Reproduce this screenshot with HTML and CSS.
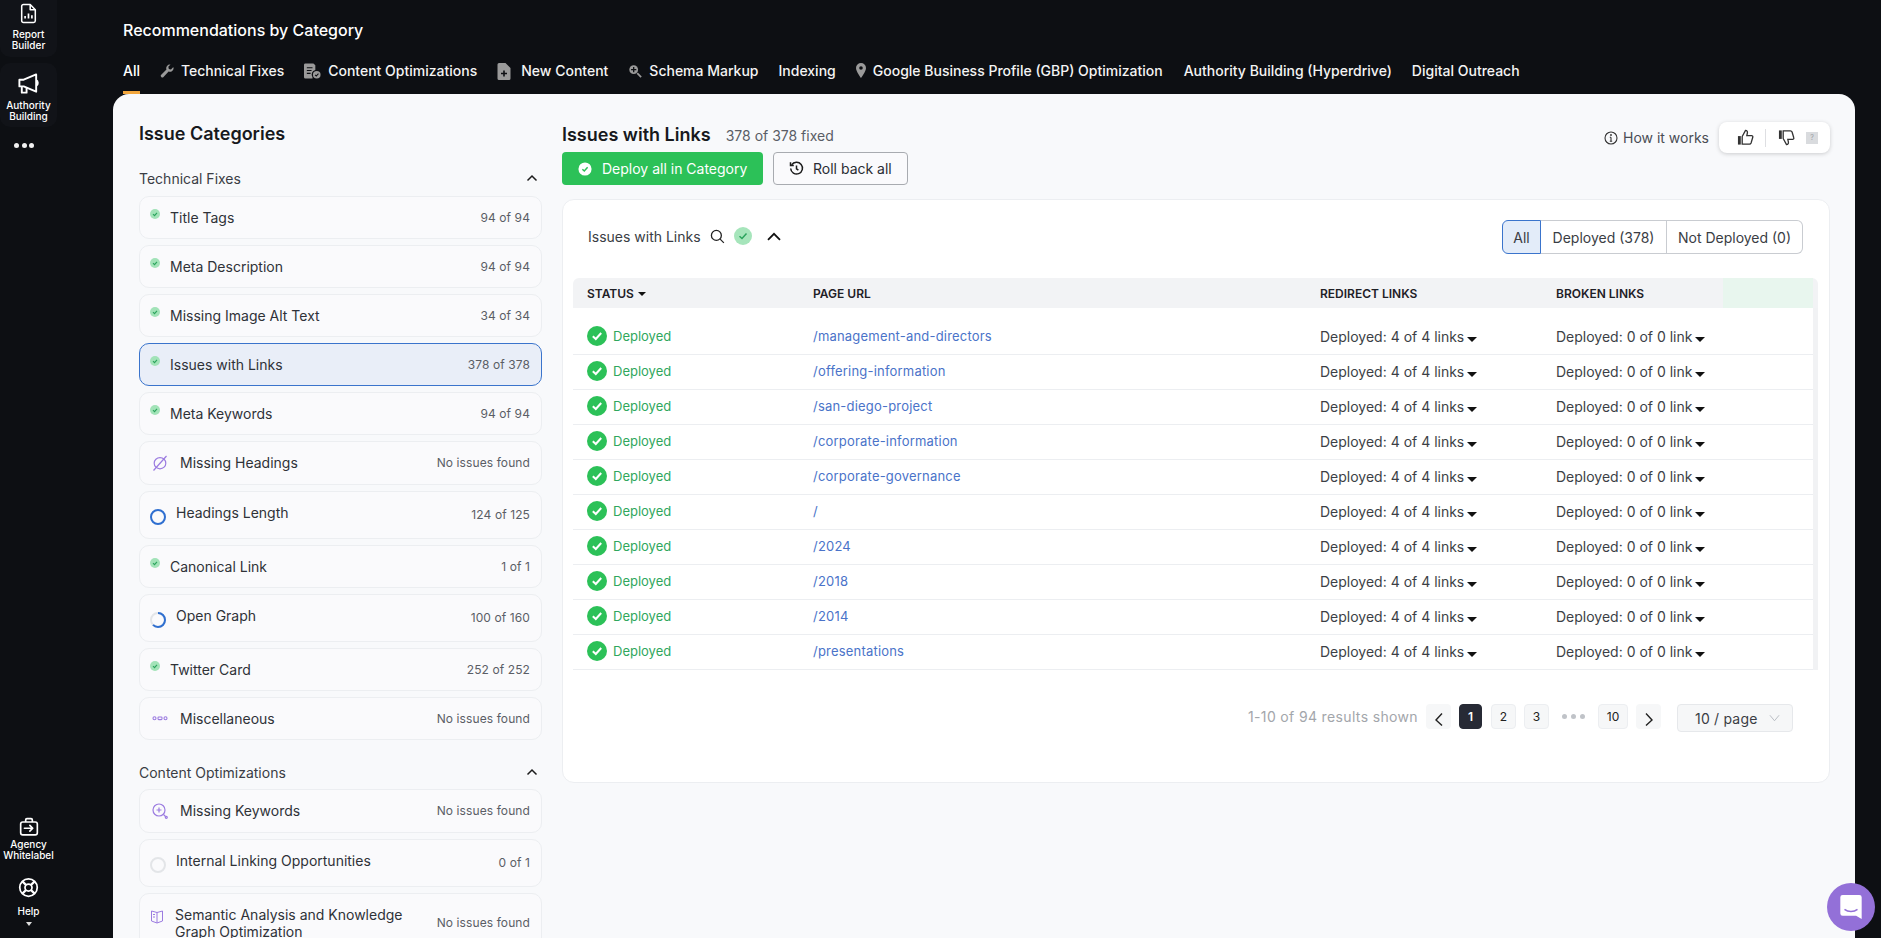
FILE: index.html
```html
<!DOCTYPE html>
<html lang="en">
<head>
<meta charset="utf-8">
<title>Recommendations by Category</title>
<link rel="stylesheet" href="styles.css">
</head>
<body>
<div class="app">
  <aside class="rail">
    <div class="rail-top">
      <div class="tile tile-first">
        <svg class="rail-icon" viewBox="0 0 20 24" fill="none" stroke="#fff" stroke-width="1.8" stroke-linejoin="round"><path d="M2 3.5A2 2 0 0 1 4 1.5h8l6 6v13a2 2 0 0 1-2 2H4a2 2 0 0 1-2-2z"/><path d="M12 1.5v6h6"/><path d="M6 18v-3M10 18v-6M14 18v-4" stroke-width="2"/></svg>
        <span class="rail-label">Report<br>Builder</span>
      </div>
      <div class="tile">
        <svg class="rail-icon" viewBox="0 0 24 24" fill="none" stroke="#fff" stroke-width="2" stroke-linejoin="round"><path d="M20 2 7 7.5H2.5v7H7L20 20z"/><path d="M20 8c2 .5 2.5 5 0 6"/><path d="M5 15v6h5v-5"/></svg>
        <span class="rail-label">Authority<br>Building</span>
      </div>
      <div class="rail-dots"><i></i><i></i><i></i></div>
    </div>
    <div class="rail-bottom">
      <div class="rail-item">
        <svg class="rail-icon" viewBox="0 0 24 24" fill="none" stroke="#fff" stroke-width="2" stroke-linejoin="round"><rect x="2" y="6" width="20" height="15.5" rx="2.5"/><path d="M8 6V3.5A1.5 1.5 0 0 1 9.500 2h5A1.500 1.500 0 0 1 16 3.500V6"/><path d="M6.500 13.500h10M13 10l3.500 3.500L13 17" stroke-linecap="round"/></svg>
        <span class="rail-label">Agency<br>Whitelabel</span>
      </div>
      <div class="rail-item rail-help">
        <svg class="rail-icon help-icon" viewBox="0 0 24 24" fill="none" stroke="#fff" stroke-width="2"><circle cx="12" cy="12" r="10"/><circle cx="12" cy="12" r="4"/><path d="M5 5l4.200 4.200M19 5l-4.200 4.200M5 19l4.200-4.200M19 19l-4.200-4.200" stroke-width="2.600"/></svg>
        <span class="rail-label">Help</span>
        <span class="help-caret"></span>
      </div>
    </div>
  </aside>

  <main class="main">
    <header class="top">
      <h1 class="page-title">Recommendations by Category</h1>
      <nav class="tabs">
        <a class="tab tab-active">All</a>
        <a class="tab"><svg class="tab-icon tab-icon-wrench" viewBox="0 0 16 16" fill="#9a9a9a"><path d="M15.500 4.200a4.300 4.300 0 0 1-5.700 4.500L4 14.800a1.700 1.700 0 0 1-2.600-2.500l6-5.900A4.300 4.300 0 0 1 12 .6L9.500 3.200l.6 2.400 2.400.6L15 3.700c.3.100.5.300.5.500z"/></svg>Technical Fixes</a>
        <a class="tab"><svg class="tab-icon tab-icon-wide" viewBox="0 0 18 16" fill="#9a9a9a"><path d="M1.500 0h8.500l2 2v5a4.800 4.800 0 0 0-3 7.500V16H1.500A1.500 1.500 0 0 1 0 14.500v-13A1.500 1.500 0 0 1 1.500 0z"/><path d="M3 4.500h6M3 7.500h5M3 10.500h4" stroke="#0d0f13" stroke-width="1.200"/><circle cx="13.500" cy="12" r="4"/><path d="M11.700 12l1.300 1.300 2.300-2.500" fill="none" stroke="#0d0f13" stroke-width="1.100"/></svg>Content Optimizations</a>
        <a class="tab tab-new"><svg class="tab-icon tab-icon-doc" viewBox="0 0 14 17" fill="#9a9a9a"><path d="M2 0h6.500L13.500 5v10.500A1.500 1.500 0 0 1 12 17H2A1.500 1.500 0 0 1 .5 15.500v-14A1.500 1.500 0 0 1 2 0z"/><path d="M7 7.500v6M4 10.500h6" stroke="#0d0f13" stroke-width="1.600"/></svg>New Content</a>
        <a class="tab"><svg class="tab-icon tab-icon-wrench" viewBox="0 0 16 16" fill="none" stroke="#9a9a9a"><circle cx="6.500" cy="6.500" r="5" fill="#9a9a9a" stroke="none"/><path d="M6.500 3.500v6M3.500 6.500h6" stroke="#0d0f13" stroke-width="1.500"/><path d="M10.500 10.500l4.500 4.500" stroke-width="2"/></svg>Schema Markup</a>
        <a class="tab">Indexing</a>
        <a class="tab"><svg class="tab-icon tab-icon-pin" viewBox="0 0 10 15" fill="#9a9a9a"><path fill-rule="evenodd" d="M5 0a5 5 0 0 1 5 5c0 3.500-5 10-5 10S0 8.500 0 5a5 5 0 0 1 5-5zm0 3.200a1.800 1.800 0 1 0 0 3.600 1.800 1.800 0 0 0 0-3.600z"/></svg>Google Business Profile (GBP) Optimization</a>
        <a class="tab tab-authority">Authority Building (Hyperdrive)</a>
        <a class="tab">Digital Outreach</a>
      </nav>
    </header>

    <div class="panel">
      <section class="cats">
        <h2 class="cats-title">Issue Categories</h2>

        <div class="group-head"><span>Technical Fixes</span><svg class="chev" viewBox="0 0 12 8" fill="none" stroke="#1c1c1c" stroke-width="1.500"><path d="M1.500 6.500 6 2l4.500 4.500"/></svg></div>
        <div class="row"><div class="row-l"><span class="dot"><svg viewBox="0 0 10 10" fill="none" stroke="#2aa35c" stroke-width="1.100"><path d="M3 5.200 4.500 6.600 7 3.800"/></svg></span><span>Title Tags</span></div><span class="count">94 of 94</span></div>
        <div class="row"><div class="row-l"><span class="dot"><svg viewBox="0 0 10 10" fill="none" stroke="#2aa35c" stroke-width="1.100"><path d="M3 5.200 4.500 6.600 7 3.800"/></svg></span><span>Meta Description</span></div><span class="count">94 of 94</span></div>
        <div class="row"><div class="row-l"><span class="dot"><svg viewBox="0 0 10 10" fill="none" stroke="#2aa35c" stroke-width="1.100"><path d="M3 5.200 4.500 6.600 7 3.800"/></svg></span><span>Missing Image Alt Text</span></div><span class="count">34 of 34</span></div>
        <div class="row row-active"><div class="row-l"><span class="dot"><svg viewBox="0 0 10 10" fill="none" stroke="#2aa35c" stroke-width="1.100"><path d="M3 5.200 4.500 6.600 7 3.800"/></svg></span><span>Issues with Links</span></div><span class="count">378 of 378</span></div>
        <div class="row"><div class="row-l"><span class="dot"><svg viewBox="0 0 10 10" fill="none" stroke="#2aa35c" stroke-width="1.100"><path d="M3 5.200 4.500 6.600 7 3.800"/></svg></span><span>Meta Keywords</span></div><span class="count">94 of 94</span></div>
        <div class="row row-empty"><div class="row-l row-l-purple"><svg class="purple" viewBox="0 0 16 16" fill="none" stroke="#9b7be0" stroke-width="1.200"><ellipse cx="8" cy="8.200" rx="5.800" ry="5.600"/><path d="M14.500 1 1.500 15.500"/></svg><span>Missing Headings</span></div><span class="count">No issues found</span></div>
        <div class="row row-tall"><div class="row-l row-l-ring"><svg class="ring" viewBox="0 0 16 16" fill="none" stroke-width="2"><circle cx="8" cy="8" r="7" stroke="#2f6fd0"/></svg><span class="raised">Headings Length</span></div><span class="count">124 of 125</span></div>
        <div class="row"><div class="row-l"><span class="dot"><svg viewBox="0 0 10 10" fill="none" stroke="#2aa35c" stroke-width="1.100"><path d="M3 5.200 4.500 6.600 7 3.800"/></svg></span><span>Canonical Link</span></div><span class="count">1 of 1</span></div>
        <div class="row row-tall"><div class="row-l row-l-ring"><svg class="ring" viewBox="0 0 16 16" fill="none" stroke-width="2"><circle cx="8" cy="8" r="7" stroke="#e3e5e8"/><path d="M8 1a7 7 0 0 1 0 14 7 7 0 0 1-5-2.100" stroke="#2f6fd0"/></svg><span class="raised">Open Graph</span></div><span class="count">100 of 160</span></div>
        <div class="row"><div class="row-l"><span class="dot"><svg viewBox="0 0 10 10" fill="none" stroke="#2aa35c" stroke-width="1.100"><path d="M3 5.200 4.500 6.600 7 3.800"/></svg></span><span>Twitter Card</span></div><span class="count">252 of 252</span></div>
        <div class="row row-empty"><div class="row-l row-l-purple"><svg class="purple" viewBox="0 0 16 16" fill="none" stroke="#9b7be0" stroke-width="1.100"><circle cx="2.500" cy="8.300" r="1.500"/><circle cx="13.500" cy="8.300" r="1.500"/><rect x="6" y="7" width="4" height="2.600" rx=".8"/></svg><span>Miscellaneous</span></div><span class="count">No issues found</span></div>

        <div class="group-head group-second"><span>Content Optimizations</span><svg class="chev" viewBox="0 0 12 8" fill="none" stroke="#1c1c1c" stroke-width="1.500"><path d="M1.500 6.500 6 2l4.500 4.500"/></svg></div>
        <div class="row row-empty"><div class="row-l row-l-purple"><svg class="purple" viewBox="0 0 16 16" fill="none" stroke="#9b7be0" stroke-width="1.200"><circle cx="7" cy="7" r="6"/><path d="M7 4.500v5M4.500 7h5M11.500 11.500l2 2"/><circle cx="14.300" cy="14.300" r="1"/></svg><span>Missing Keywords</span></div><span class="count">No issues found</span></div>
        <div class="row row-tall"><div class="row-l row-l-ring"><svg class="ring" viewBox="0 0 16 16" fill="none" stroke-width="2"><circle cx="8" cy="8" r="7" stroke="#e3e5e8"/></svg><span class="raised">Internal Linking Opportunities</span></div><span class="count">0 of 1</span></div>
        <div class="row row-wrap"><div class="row-l row-l-book"><svg class="book" viewBox="0 0 14 14" fill="none" stroke="#9b7be0" stroke-width="1"><path d="M7 2.500 1.500 1v10L7 13l5.500-2V1zM7 2.500V13M3 4.500h2M3 7h2"/></svg><span class="wrap-name">Semantic Analysis and Knowledge Graph Optimization</span></div><span class="count">No issues found</span></div>
      </section>

      <section class="detail">
        <div class="detail-top">
          <div>
            <div class="detail-heading"><h2>Issues with Links</h2><span>378 of 378 fixed</span></div>
            <div class="actions">
              <button class="btn btn-green"><svg class="btn-icon" viewBox="0 0 16 16"><circle cx="8" cy="8" r="7.500" fill="#fff"/><path d="M5 8.200 7.200 10.300 11 6" fill="none" stroke="#2cc158" stroke-width="1.700"/></svg>Deploy all in Category</button>
              <button class="btn btn-outline"><svg class="btn-icon" viewBox="0 0 16 16" fill="none" stroke="#1c1c1c" stroke-width="1.600"><path d="M2.800 4.200A6.300 6.300 0 1 1 1.800 8"/><path d="M1.600 1.200v3.500h3.500"/><path d="M8 4.800v3.500l2 1.500"/></svg>Roll back all</button>
            </div>
          </div>
          <div class="detail-tools">
            <span class="how"><svg class="how-icon" viewBox="0 0 14 14" fill="none" stroke="#333" stroke-width="1.100"><circle cx="7" cy="7" r="6"/><path d="M7 6.200v4M5.800 10.200h2.400M5.800 6.200H7"/><circle cx="7" cy="4" r=".4"/></svg>How it works</span>
            <div class="vote">
              <svg class="thumb" viewBox="0 0 18 18" fill="none" stroke="#333" stroke-width="1.400"><rect x="1" y="7.500" width="3" height="9" fill="#333" stroke="none"/><path d="M5.500 8 9 1.500c1.500 0 2.300 1 2 2.500l-.6 3h5c1 0 1.600.9 1.300 1.800l-1.800 6c-.3.800-.9 1.200-1.700 1.200H5.500z"/></svg>
              <span class="vote-sep"></span>
              <svg class="thumb thumb-down" viewBox="0 0 18 18" fill="none" stroke="#333" stroke-width="1.400"><rect x="1" y="1.500" width="3" height="9" fill="#333" stroke="none"/><path d="M5.500 10 9 16.500c1.500 0 2.300-1 2-2.500l-.6-3h5c1 0 1.600-.9 1.300-1.800l-1.800-6C14.600 2.400 14 2 13.200 2H5.500z"/></svg>
              <span class="vote-help">?</span>
            </div>
          </div>
        </div>

        <div class="card">
          <div class="card-head">
            <div class="card-title">
              <span>Issues with Links</span>
              <svg class="search" viewBox="0 0 16 16" fill="none" stroke="#222" stroke-width="1.400"><circle cx="6.800" cy="6.800" r="5.300"/><path d="m10.800 10.800 4 4"/></svg>
              <span class="card-ok"><svg viewBox="0 0 18 18" fill="none" stroke="#2aa35c" stroke-width="1.500"><path d="M5.500 9.200 8 11.500l4.500-5"/></svg></span>
              <svg class="card-chev" viewBox="0 0 14 9" fill="none" stroke="#111" stroke-width="1.800"><path d="M1 7.800 7 1.800l6 6"/></svg>
            </div>
            <div class="seg">
              <span class="seg-item seg-on">All</span>
              <span class="seg-item seg-mid">Deployed (378)</span>
              <span class="seg-item seg-last">Not Deployed (0)</span>
            </div>
          </div>

          <div class="thead">
            <span class="th">STATUS<i class="caret caret-head"></i></span>
            <span class="th">PAGE URL</span>
            <span class="th">REDIRECT LINKS</span>
            <span class="th">BROKEN LINKS</span>
            <span class="th-green"></span>
          </div>
          <div class="tbody">
            <div class="tr"><span class="status"><svg class="ok" viewBox="0 0 20 20"><circle cx="10" cy="10" r="10" fill="#2cc158"/><path d="M5.800 10.200 8.800 13l5.400-6" fill="none" stroke="#fff" stroke-width="2"/></svg>Deployed</span><a class="url">/management-and-directors</a><span class="links">Deployed: 4 of 4 links<i class="caret"></i></span><span class="links">Deployed: 0 of 0 link<i class="caret"></i></span></div>
            <div class="tr"><span class="status"><svg class="ok" viewBox="0 0 20 20"><circle cx="10" cy="10" r="10" fill="#2cc158"/><path d="M5.800 10.200 8.800 13l5.400-6" fill="none" stroke="#fff" stroke-width="2"/></svg>Deployed</span><a class="url">/offering-information</a><span class="links">Deployed: 4 of 4 links<i class="caret"></i></span><span class="links">Deployed: 0 of 0 link<i class="caret"></i></span></div>
            <div class="tr"><span class="status"><svg class="ok" viewBox="0 0 20 20"><circle cx="10" cy="10" r="10" fill="#2cc158"/><path d="M5.800 10.200 8.800 13l5.400-6" fill="none" stroke="#fff" stroke-width="2"/></svg>Deployed</span><a class="url">/san-diego-project</a><span class="links">Deployed: 4 of 4 links<i class="caret"></i></span><span class="links">Deployed: 0 of 0 link<i class="caret"></i></span></div>
            <div class="tr"><span class="status"><svg class="ok" viewBox="0 0 20 20"><circle cx="10" cy="10" r="10" fill="#2cc158"/><path d="M5.800 10.200 8.800 13l5.400-6" fill="none" stroke="#fff" stroke-width="2"/></svg>Deployed</span><a class="url">/corporate-information</a><span class="links">Deployed: 4 of 4 links<i class="caret"></i></span><span class="links">Deployed: 0 of 0 link<i class="caret"></i></span></div>
            <div class="tr"><span class="status"><svg class="ok" viewBox="0 0 20 20"><circle cx="10" cy="10" r="10" fill="#2cc158"/><path d="M5.800 10.200 8.800 13l5.400-6" fill="none" stroke="#fff" stroke-width="2"/></svg>Deployed</span><a class="url">/corporate-governance</a><span class="links">Deployed: 4 of 4 links<i class="caret"></i></span><span class="links">Deployed: 0 of 0 link<i class="caret"></i></span></div>
            <div class="tr"><span class="status"><svg class="ok" viewBox="0 0 20 20"><circle cx="10" cy="10" r="10" fill="#2cc158"/><path d="M5.800 10.200 8.800 13l5.400-6" fill="none" stroke="#fff" stroke-width="2"/></svg>Deployed</span><a class="url">/</a><span class="links">Deployed: 4 of 4 links<i class="caret"></i></span><span class="links">Deployed: 0 of 0 link<i class="caret"></i></span></div>
            <div class="tr"><span class="status"><svg class="ok" viewBox="0 0 20 20"><circle cx="10" cy="10" r="10" fill="#2cc158"/><path d="M5.800 10.200 8.800 13l5.400-6" fill="none" stroke="#fff" stroke-width="2"/></svg>Deployed</span><a class="url">/2024</a><span class="links">Deployed: 4 of 4 links<i class="caret"></i></span><span class="links">Deployed: 0 of 0 link<i class="caret"></i></span></div>
            <div class="tr"><span class="status"><svg class="ok" viewBox="0 0 20 20"><circle cx="10" cy="10" r="10" fill="#2cc158"/><path d="M5.800 10.200 8.800 13l5.400-6" fill="none" stroke="#fff" stroke-width="2"/></svg>Deployed</span><a class="url">/2018</a><span class="links">Deployed: 4 of 4 links<i class="caret"></i></span><span class="links">Deployed: 0 of 0 link<i class="caret"></i></span></div>
            <div class="tr"><span class="status"><svg class="ok" viewBox="0 0 20 20"><circle cx="10" cy="10" r="10" fill="#2cc158"/><path d="M5.800 10.200 8.800 13l5.400-6" fill="none" stroke="#fff" stroke-width="2"/></svg>Deployed</span><a class="url">/2014</a><span class="links">Deployed: 4 of 4 links<i class="caret"></i></span><span class="links">Deployed: 0 of 0 link<i class="caret"></i></span></div>
            <div class="tr"><span class="status"><svg class="ok" viewBox="0 0 20 20"><circle cx="10" cy="10" r="10" fill="#2cc158"/><path d="M5.800 10.200 8.800 13l5.400-6" fill="none" stroke="#fff" stroke-width="2"/></svg>Deployed</span><a class="url">/presentations</a><span class="links">Deployed: 4 of 4 links<i class="caret"></i></span><span class="links">Deployed: 0 of 0 link<i class="caret"></i></span></div>
          </div>

          <div class="pager">
            <span class="pager-info">1-10 of 94 results shown</span>
            <span class="pg pg-arrow"><svg viewBox="0 0 10 14" fill="none" stroke="#222" stroke-width="1.400"><path d="M8 1.500 2 8l6 5.500"/></svg></span>
            <span class="pg pg-on">1</span>
            <span class="pg">2</span>
            <span class="pg">3</span>
            <span class="pg-dots"><i></i><i></i><i></i></span>
            <span class="pg pg-ten">10</span>
            <span class="pg pg-arrow"><svg viewBox="0 0 10 14" fill="none" stroke="#222" stroke-width="1.400"><path d="M2 1.500 8 8l-6 5.500"/></svg></span>
            <span class="page-size">10 / page<svg viewBox="0 0 12 8" fill="none" stroke="#b5b9bf" stroke-width="1"><path d="M1 1l5 6 5-6"/></svg></span>
          </div>
        </div>
      </section>
    </div>
  </main>
</div>
<div class="chat"><svg viewBox="0 0 24 28" width="24" height="26"><path fill="#fff" d="M3 1h18a2.500 2.500 0 0 1 2.500 2.500V27l-6-3.500H3A2.500 2.500 0 0 1 .5 21V3.500A2.500 2.500 0 0 1 3 1z"/><path d="M5 16.500c4 3 10 3 14 0" fill="none" stroke="#9370d8" stroke-width="1.600"/></svg></div>
</body>
</html>
```
FILE: styles.css
```css
* { box-sizing: border-box; }
html, body { margin: 0; height: 100%; overflow: hidden; }
body { background: #0d0f13; font-family: Inter, "Liberation Sans", sans-serif; color: #2a2d33; font-size: 14px; }
h1, h2 { margin: 0; }
.app { display: flex; height: 938px; }

/* rail */
.rail { width: 113px; flex: none; height: 938px; display: flex; flex-direction: column; justify-content: space-between; color: #fff; }
.rail-top { width: 57px; }
.tile { width: 57px; height: 64px; background: #111318; border-radius: 10px; display: flex; flex-direction: column; align-items: center; margin-bottom: 6px; padding-top: 9px; }
.tile-first { height: 57px; padding-top: 3px; border-radius: 0 0 10px 10px; }
.rail-icon { width: 20px; height: 22px; display: block; }
.tile .rail-icon { width: 23px; height: 24px; margin-bottom: 4px; }
.tile-first .rail-icon { width: 17px; height: 21px; margin-bottom: 5px; }
.rail-label { font-size: 10px; line-height: 11px; text-align: center; font-weight: 500; white-space: nowrap; }
.rail-dots { display: flex; gap: 2.500px; padding: 10px 0 0 14px; }
.rail-dots i { width: 5px; height: 5px; border-radius: 50%; background: #f1f1f1; }
.rail-bottom { width: 57px; padding-bottom: 12px; }
.rail-item { display: flex; flex-direction: column; align-items: center; }
.rail-item .rail-icon { margin-bottom: 1px; }
.rail-help { margin-top: 16px; }
.rail-item .help-icon { margin-bottom: 8px; width: 21px; height: 21px; }
.help-caret { width: 0; height: 0; border: 3.500px solid transparent; border-top: 4px solid #ddd; border-bottom: 0; margin-top: 5px; }

/* top */
.main { flex: 1; min-width: 0; display: flex; flex-direction: column; }
.top { height: 94px; padding: 21px 0 0 10px; }
.page-title { font-size: 16px; font-weight: 500; line-height: 19px; color: #fff; }
.tabs { display: flex; gap: 20px; margin-top: 22px; height: 32px; }
.tab { position: relative; display: flex; align-items: flex-start; gap: 7px; color: #f4f4f4; font-weight: 500; font-size: 14px; line-height: 18px; white-space: nowrap; }
.tab-active { color: #fff; }
.tab-active::after { content: ""; position: absolute; left: 0; right: 0; bottom: 0; height: 3px; background: #f2a63c; }
.tab-new { gap: 10px; }
.tab-authority { margin-left: 1px; }
.tab-icon { width: 15px; height: 16px; flex: none; margin-top: 1px; }
.tab-icon-wrench { width: 14px; }
.tab-icon-wide { width: 17px; }
.tab-icon-doc { width: 14px; height: 17px; }
.tab-icon-pin { width: 10px; height: 15px; }

/* panel */
.panel { flex: 1; min-height: 0; width: 1742px; background: #f8f9fb; border-radius: 16px 16px 0 0; padding: 28px 25px 0 26px; display: flex; gap: 20px; overflow: hidden; }
.cats { width: 403px; flex: none; }
.cats-title { font-size: 18px; line-height: 24px; font-weight: 600; color: #17191d; }
.group-head { display: flex; justify-content: space-between; align-items: center; margin-top: 23px; height: 18px; margin-bottom: 9px; font-size: 14px; color: #3a3d44; padding-right: 4px; }
.group-second { margin-top: 23px; margin-bottom: 8px; }
.chev { width: 12px; height: 8px; }
.row { display: flex; justify-content: space-between; align-items: center; height: 43px; margin-bottom: 6px; background: #fafafc; border: 1.500px solid #eceef1; border-radius: 10px; padding: 0 11px 0 10px; font-size: 14px; color: #2f3238; }
.row-l { display: flex; align-items: center; gap: 10px; }
.row-l-purple { gap: 12px; padding-left: 2px; }
.row-l-ring { gap: 10px; }
.row-l-book { gap: 11px; align-self: flex-start; padding-top: 12px; align-items: flex-start; }
.row-empty { height: 43.500px; }
.row-tall { height: 48px; }
.row-wrap { height: 60px; }
.row-active { background: #e9eef8; border-color: #3a74cc; }
.dot { width: 10px; height: 10px; border-radius: 50%; background: #a2e3b8; margin-top: -7px; display: block; }
.dot svg { display: block; width: 10px; height: 10px; }
.purple { width: 16px; height: 16px; }
.ring { width: 16px; height: 16px; margin-top: 4px; flex: none; }
.raised { margin-bottom: 5px; }
.book { width: 14px; height: 14px; margin-top: 4px; flex: none; }
.wrap-name { width: 240px; line-height: 17px; }
.count { font-size: 12px; color: #5a5e66; letter-spacing: .1px; white-space: nowrap; }

/* detail */
.detail { flex: 1; min-width: 0; }
.detail-top { display: flex; justify-content: space-between; align-items: flex-start; height: 77px; }
.detail-heading { display: flex; align-items: baseline; gap: 15px; height: 30px; padding-top: 1px; }
.detail-heading h2 { font-size: 18px; line-height: 24px; font-weight: 600; color: #17191d; }
.detail-heading span { font-size: 14px; color: #5a5e66; }
.actions { display: flex; gap: 10px; }
.btn { display: flex; align-items: center; height: 33px; border-radius: 4px; font-family: inherit; font-size: 14px; padding: 0; cursor: pointer; }
.btn-green { width: 201px; background: #2cc158; border: 0; color: #fff; padding-left: 16px; gap: 10px; }
.btn-outline { width: 135px; background: #fafafc; border: 1px solid #a8abb0; color: #2a2d33; padding-left: 15px; gap: 9px; }
.btn-icon { width: 14px; height: 14px; }
.btn-outline .btn-icon { width: 15px; height: 15px; }
.detail-tools { display: flex; align-items: center; gap: 10px; }
.how { display: flex; align-items: center; gap: 5px; font-size: 14px; color: #4a4d54; }
.how-icon { width: 14px; height: 14px; }
.vote { width: 111px; height: 31px; background: #fff; border-radius: 8px; box-shadow: 0 1px 4px rgba(0,0,0,.18); display: flex; align-items: center; padding-left: 18px; }
.thumb { width: 17px; height: 17px; }
.vote-sep { width: 1px; height: 18px; background: #dedfe2; margin: 0 12px 0 11px; }
.vote-help { width: 12px; height: 12px; background: #d9dbde; color: #9da0a5; font-size: 7px; line-height: 12px; text-align: center; margin-left: 11px; }

/* card */
.card { height: 584px; background: #fff; border: 1px solid #eceef1; border-radius: 12px; padding: 0 0 0 10px; }
.card-head { display: flex; justify-content: space-between; align-items: flex-start; height: 78px; padding: 20px 26px 0 15px; }
.card-title { display: flex; align-items: center; gap: 9px; height: 34px; margin-top: -1px; color: #3a3d44; font-size: 14px; }
.search { width: 15px; height: 15px; }
.card-ok { width: 18px; height: 18px; border-radius: 50%; background: #a6e5bb; display: block; }
.card-ok svg { display: block; width: 18px; height: 18px; }
.card-chev { width: 14px; height: 9px; margin-left: 6px; }
.seg { display: flex; height: 34px; font-size: 14px; color: #3a3d44; }
.seg-item { display: flex; align-items: center; justify-content: center; border: 1px solid #c9ccd1; }
.seg-on { width: 39px; background: #e3ecf9; border-color: #3a74cc; border-radius: 6px 0 0 6px; }
.seg-mid { width: 126px; border-left: 0; }
.seg-last { width: 136px; border-left: 0; border-radius: 0 6px 6px 0; }
.thead, .tr { display: grid; padding-left: 14px; align-items: center; }
.thead { grid-template-columns: 226px 507px 236px 167px 90px; width: 1245px; height: 30px; background: #f2f3f5; border-radius: 6px 6px 0 0; padding-right: 5px; }
.th { font-weight: 600; color: #1e2026; font-size: 12px; display: flex; align-items: center; }
.th-green { height: 30px; background: #e8f6ee; }
.tbody { width: 1245px; border-right: 5px solid #f1f2f4; padding-top: 12px; }
.tr { height: 35px; padding-bottom: 2px; border-bottom: 1px solid #eceef1; font-size: 14px; grid-template-columns: 226px 507px 236px 1fr; }
.status { display: flex; align-items: center; gap: 6px; color: #2fa75d; font-size: 13px; }
.ok { width: 20px; height: 20px; }
.url { color: #4a73c9; font-size: 13px; letter-spacing: .2px; }
.links { color: #3c3f46; font-size: 14px; display: flex; align-items: center; }
.caret { display: block; width: 0; height: 0; border: 5px solid transparent; border-top: 5px solid #111; border-bottom: 0; margin: 6px 0 0 3px; }
.caret-head { border-width: 4px; border-top-width: 4px; border-bottom: 0; margin: 1px 0 0 4px; }

/* pager */
.pager { display: flex; align-items: flex-start; padding: 34px 0 0 675px; font-size: 12px; }
.pager-info { width: 178px; color: #a3a6ab; font-size: 14px; line-height: 25px; letter-spacing: .35px; white-space: nowrap; }
.pg { display: flex; align-items: center; justify-content: center; width: 25px; height: 25px; background: #f6f7f8; border: 1px solid #eceef1; border-radius: 4px; margin-right: 8px; color: #222; }
.pg-on { width: 23px; background: #272a35; color: #fff; border-color: #272a35; margin-right: 9px; font-weight: 600; }
.pg-ten { width: 30px; margin-right: 8px; }
.pg-arrow { border: 0; }
.pg-arrow svg { width: 10px; height: 14px; margin-top: 4px; }
.pg-dots { display: flex; gap: 4px; width: 41px; padding: 10px 0 0 5px; }
.pg-dots i { width: 5px; height: 5px; border-radius: 50%; background: #c0c3c8; }
.page-size { display: flex; align-items: center; justify-content: space-between; width: 116px; height: 28px; margin-left: 8px; padding: 0 12px 0 17px; background: #f6f7f8; border: 1px solid #e6e8eb; border-radius: 4px; color: #3a3d44; font-size: 14px; letter-spacing: .2px; }
.page-size svg { width: 11px; height: 8px; }

.chat { position: fixed; left: 1827px; top: 883px; width: 48px; height: 48px; border-radius: 50%; background: #9370d8; display: flex; align-items: center; justify-content: center; }
```
